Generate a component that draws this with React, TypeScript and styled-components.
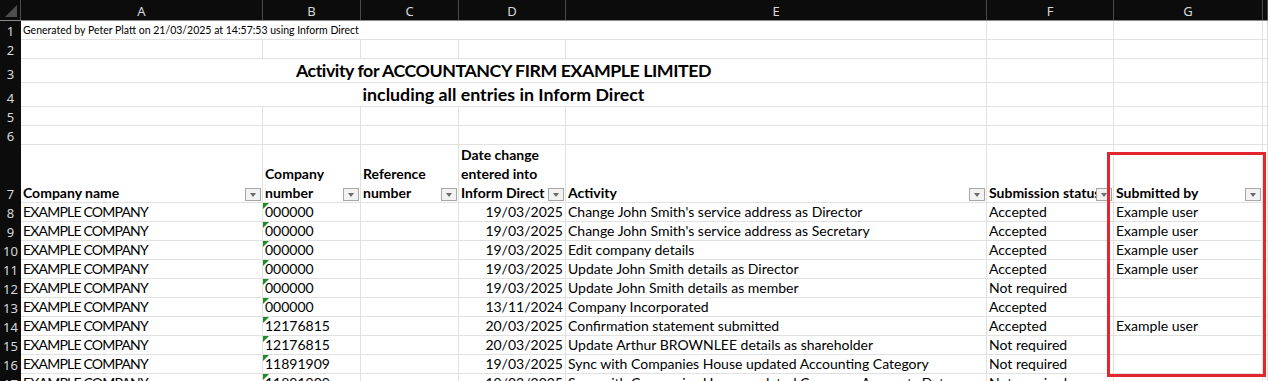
import React from 'react'
import styled, { createGlobalStyle, css } from 'styled-components'

const COLS = '21px 242px 98px 98px 107px 421px 127px 149px 1fr'
const GRID = '#e1e1e1'
const DARK = '#0c0c0c'

const GlobalStyle = createGlobalStyle`
  html, body {
    margin: 0;
    padding: 0;
    background: #fff;
    overflow: hidden;
  }
  body {
    width: 1268px;
    height: 381px;
    font-family: Lato, "Open Sans", sans-serif;
  }
`

const Sheet = styled.div`
  position: relative;
  width: 1268px;
  height: 381px;
  overflow: hidden;
  background: #fff;
`

const Row = styled.div<{ h: number }>`
  display: grid;
  grid-template-columns: ${COLS};
  height: ${(p) => p.h}px;
`

const HeaderBar = styled(Row)`
  background: ${DARK};
  border-bottom: 1px solid #8c8c8c;
  box-sizing: border-box;
`

const Corner = styled.div`
  position: relative;
  border-right: 1px solid #4a4a4a;

  &::after {
    content: '';
    position: absolute;
    right: 3px;
    bottom: 3px;
    border-style: solid;
    border-width: 0 0 12px 12px;
    border-color: transparent transparent #4d4d4d transparent;
  }
`

const ColLetter = styled.div`
  display: flex;
  align-items: center;
  justify-content: center;
  color: #d8d8d8;
  font-family: 'Noto Sans', sans-serif;
  font-size: 13px;
  border-right: 1px solid #4a4a4a;
  padding-top: 1px;
`

const RowNum = styled.div`
  background: ${DARK};
  color: #d8d8d8;
  font-family: 'Noto Sans', sans-serif;
  font-size: 13px;
  display: flex;
  align-items: flex-end;
  justify-content: center;
  line-height: 18px;
`

const Cell = styled.div<{
  span?: number
  right?: boolean
  center?: boolean
  bold?: boolean
  size?: number
  wrap?: boolean
  caps?: boolean
  flagged?: boolean
}>`
  position: relative;
  grid-column: span ${(p) => p.span || 1};
  box-sizing: border-box;
  border-right: 1px solid ${GRID};
  border-bottom: 1px solid ${GRID};
  display: flex;
  align-items: flex-end;
  justify-content: ${(p) => (p.right ? 'flex-end' : p.center ? 'center' : 'flex-start')};
  padding: 0 2px 0 2px;
  font-size: ${(p) => p.size || 14}px;
  line-height: ${(p) => (p.size && p.size > 16 ? 23 : 18)}px;
  font-weight: ${(p) => (p.bold ? 700 : 400)};
  letter-spacing: ${(p) => (p.caps ? '-0.8px' : 'normal')};
  color: #000;
  white-space: ${(p) => (p.wrap ? 'normal' : 'nowrap')};
  overflow: hidden;

  ${(p) =>
    p.flagged &&
    css`
      &::before {
        content: '';
        position: absolute;
        left: 0;
        top: 0;
        border-style: solid;
        border-width: 6px 6px 0 0;
        border-color: #1f8a28 transparent transparent transparent;
      }
    `}
`

const Title = styled(Cell)`
  letter-spacing: ${(p) => (p.caps ? '-0.45px' : 'normal')};
`

const HeadText = styled.span<{ pad?: number }>`
  display: block;
  padding-right: ${(p) => p.pad ?? 18}px;
  line-height: 19px;
`

const FilterButton = styled.span`
  position: absolute;
  right: 1px;
  bottom: 1px;
  width: 16px;
  height: 13px;
  box-sizing: border-box;
  border: 1px solid #a6a6a6;
  background: #f2f2f2;

  &::after {
    content: '';
    position: absolute;
    left: 4px;
    top: 4px;
    border-style: solid;
    border-width: 4px 3.5px 0 3.5px;
    border-color: #6a6a6a transparent transparent transparent;
  }
`

const Highlight = styled.div`
  position: absolute;
  left: 1107px;
  top: 152px;
  width: 159px;
  height: 225px;
  box-sizing: border-box;
  border: 3px solid #e3262d;
  pointer-events: none;
`

type DataRow = [string, string, string, string, string]

const rows: DataRow[] = [
  ['000000', '19/03/2025', "Change John Smith's service address as Director", 'Accepted', 'Example user'],
  ['000000', '19/03/2025', "Change John Smith's service address as Secretary", 'Accepted', 'Example user'],
  ['000000', '19/03/2025', 'Edit company details', 'Accepted', 'Example user'],
  ['000000', '19/03/2025', 'Update John Smith details as Director', 'Accepted', 'Example user'],
  ['000000', '19/03/2025', 'Update John Smith details as member', 'Not required', ''],
  ['000000', '13/11/2024', 'Company Incorporated', 'Accepted', ''],
  ['12176815', '20/03/2025', 'Confirmation statement submitted', 'Accepted', 'Example user'],
  ['12176815', '20/03/2025', 'Update Arthur BROWNLEE details as shareholder', 'Not required', ''],
  ['11891909', '19/03/2025', 'Sync with Companies House updated Accounting Category', 'Not required', ''],
  ['11891909', '19/03/2025', 'Sync with Companies House updated Company Accounts Date', 'Not required', ''],
]

const headers = [
  { label: 'Company name' },
  { label: 'Company number', wrap: true },
  { label: 'Reference number', wrap: true },
  { label: 'Date change entered into Inform Direct', wrap: true },
  { label: 'Activity' },
  { label: 'Submission status', pad: 0 },
  { label: 'Submitted by' },
]

const BlankRow = ({ n, h = 19 }: { n: number; h?: number }) => (
  <Row h={h}>
    <RowNum>{n}</RowNum>
    {Array.from({ length: 8 }).map((_, i) => (
      <Cell key={i} />
    ))}
  </Row>
)

const App = () => {
  return (
    <>
      <GlobalStyle />
      <Sheet>
        <HeaderBar h={21}>
          <Corner />
          {['A', 'B', 'C', 'D', 'E', 'F', 'G', ''].map((l, i) => (
            <ColLetter key={i}>{l}</ColLetter>
          ))}
        </HeaderBar>

        <Row h={19}>
          <RowNum>1</RowNum>
          <Cell span={5} size={10.5}>
            Generated by Peter Platt on 21/03/2025 at 14:57:53 using Inform Direct
          </Cell>
          <Cell />
          <Cell />
          <Cell />
        </Row>
        <BlankRow n={2} />
        <Row h={24}>
          <RowNum>3</RowNum>
          <Title span={5} center bold caps size={17.8}>
            Activity for ACCOUNTANCY FIRM EXAMPLE LIMITED
          </Title>
          <Cell />
          <Cell />
          <Cell />
        </Row>
        <Row h={24}>
          <RowNum>4</RowNum>
          <Title span={5} center bold size={17.8}>
            including all entries in Inform Direct
          </Title>
          <Cell />
          <Cell />
          <Cell />
        </Row>
        <BlankRow n={5} />
        <BlankRow n={6} />

        <Row h={58}>
          <RowNum>7</RowNum>
          {headers.map((h) => (
            <Cell key={h.label} bold wrap={h.wrap}>
              <HeadText pad={h.pad}>{h.label}</HeadText>
              <FilterButton />
            </Cell>
          ))}
          <Cell />
        </Row>

        {rows.map((r, i) => (
          <Row h={19} key={i}>
            <RowNum>{i + 8}</RowNum>
            <Cell caps>EXAMPLE COMPANY</Cell>
            <Cell flagged>{r[0]}</Cell>
            <Cell />
            <Cell right>{r[1]}</Cell>
            <Cell>{r[2]}</Cell>
            <Cell>{r[3]}</Cell>
            <Cell>{r[4]}</Cell>
            <Cell />
          </Row>
        ))}

        <Highlight />
      </Sheet>
    </>
  )
}

export default App
